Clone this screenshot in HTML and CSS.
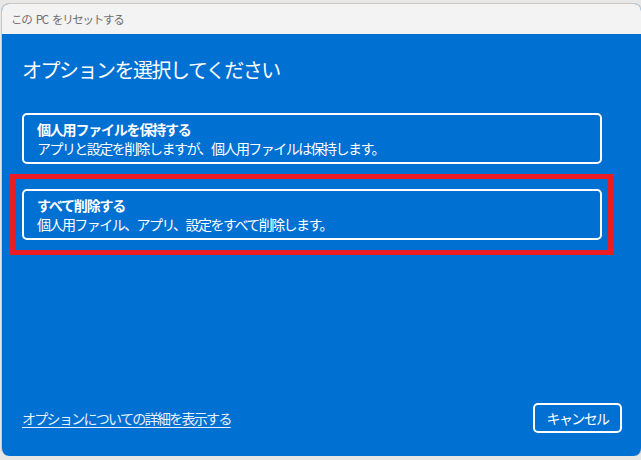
FILE: index.html
```html
<!DOCTYPE html>
<html lang="ja">
<head>
<meta charset="utf-8">
<title>この PC をリセットする</title>
<link rel="stylesheet" href="styles.css">
</head>
<body>
<div class="window">
  <div class="titlebar">この PC をリセットする</div>
  <div class="content">
    <h1 class="heading">オプションを選択してください</h1>
    <div class="options">
      <div class="option">
        <div class="option-title">個人用ファイルを保持する</div>
        <div class="option-desc">アプリと設定を削除しますが、個人用ファイルは保持します。</div>
      </div>
      <div class="option highlighted">
        <div class="option-title">すべて削除する</div>
        <div class="option-desc">個人用ファイル、アプリ、設定をすべて削除します。</div>
      </div>
    </div>
    <div class="footer">
      <a class="link" href="#">オプションについての詳細を表示する</a>
      <button class="cancel" type="button">キャンセル</button>
    </div>
  </div>
</div>
</body>
</html>
```

FILE: styles.css
```css
html, body {
  margin: 0;
  padding: 0;
}
body {
  width: 641px;
  height: 460px;
  overflow: hidden;
  background: #e9e7e5;
  font-family: "Noto Sans CJK JP", "Noto Sans", sans-serif;
}
.window {
  margin: 3px 0 0 1px;
  width: 639px;
  height: 452px;
  border: 1px solid #c9c9c9;
  border-bottom: 0;
  border-radius: 8px;
  overflow: hidden;
  display: flex;
  flex-direction: column;
  background: #0070d2;
}
.titlebar {
  height: 30px;
  flex: none;
  background: #f3f3f3;
  color: #6f6f6f;
  font-size: 11.5px;
  line-height: 30px;
  padding-left: 9px;
  letter-spacing: -1.3px;
  word-spacing: 3px;
}
.content {
  flex: 1;
  display: flex;
  flex-direction: column;
  padding: 22px 19px 23px 20px;
  color: #ffffff;
}
.heading {
  margin: 0;
  font-weight: 400;
  font-size: 20px;
  line-height: 28px;
  letter-spacing: -1.5px;
}
.options {
  margin-top: 29px;
  display: flex;
  flex-direction: column;
  gap: 25px;
}
.option {
  width: 550px;
  border: 2px solid #ffffff;
  border-radius: 5px;
  padding: 5px 13px 4px 13px;
  font-size: 14px;
  line-height: 19px;
  letter-spacing: -1.2px;
}
.option-title {
  font-weight: 700;
}
.option-desc {
  letter-spacing: -1.55px;
}
.highlighted {
  position: relative;
}
.highlighted::after {
  content: "";
  position: absolute;
  left: -14px;
  top: -17px;
  right: -13px;
  bottom: -17px;
  border: 5px solid #ec1c24;
  pointer-events: none;
}
.footer {
  margin-top: auto;
  display: flex;
  align-items: center;
  justify-content: space-between;
}
.link {
  color: #e8f1fb;
  font-size: 14px;
  letter-spacing: -1.7px;
  text-decoration: underline;
  text-underline-offset: 3px;
  text-decoration-thickness: 1px;
}
.cancel {
  width: 89px;
  height: 30px;
  border: 2px solid #ffffff;
  border-radius: 5px;
  background: transparent;
  color: #ffffff;
  font-family: "Noto Sans CJK JP", "Noto Sans", sans-serif;
  font-size: 14px;
  letter-spacing: -1.6px;
  padding: 0;
}
```
